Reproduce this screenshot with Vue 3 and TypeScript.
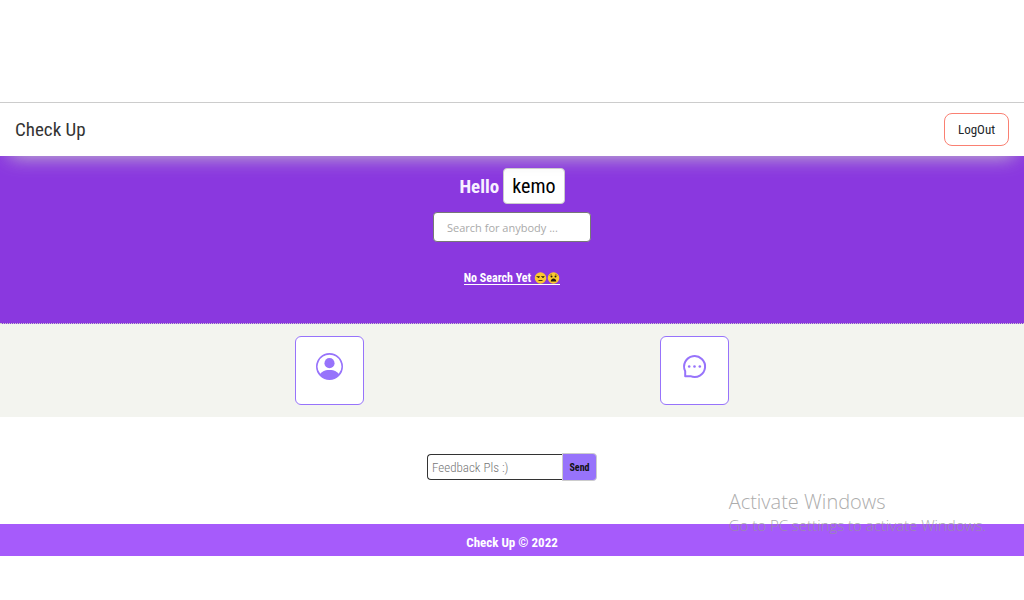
<script setup lang="ts">
import { ref } from 'vue'

const userName = ref<string>('kemo')
const search = ref<string>('')
const feedback = ref<string>('')
</script>

<template>
  <div class="page">
    <header class="bar">
      <h1 class="brand">Check Up</h1>
      <button class="logout" type="button">LogOut</button>
    </header>

    <main>
      <section class="hero">
        <h2 class="hello">Hello <span class="name">{{ userName }}</span></h2>
        <input v-model="search" class="search" type="text" placeholder="Search for anybody ..." aria-label="Search for anybody" />
        <p class="empty">
          <span>No Search Yet</span>
          <svg class="face first" viewBox="0 0 24 24" aria-hidden="true">
            <circle cx="12" cy="12" r="11.5" fill="#fbc92f" />
            <path d="M4 9h6.500M13.500 9H20" stroke="#5b4512" stroke-width="2" />
            <path d="M6 10h4a2 2 0 0 1-4 0M15 10h4a2 2 0 0 1-4 0" fill="#3a2c10" />
            <path d="M8 17h8" stroke="#4a3812" stroke-width="2" />
          </svg>
          <svg class="face" viewBox="0 0 24 24" aria-hidden="true">
            <circle cx="12" cy="12" r="11.5" fill="#fbc92f" />
            <path d="M4 7l5-3M20 7l-5-3" stroke="#9b751b" stroke-width="1.5" />
            <circle cx="8" cy="9" r="2" fill="#241b12" />
            <circle cx="16" cy="9" r="2" fill="#241b12" />
            <path d="M6.500 19c0-8 11-8 11 0z" fill="#241b12" />
          </svg>
        </p>
      </section>

      <nav class="tiles" aria-label="Sections">
        <a class="tile" href="#profile" aria-label="Profile">
          <svg viewBox="0 0 16 16" fill="currentColor" aria-hidden="true">
            <path d="M11 6a3 3 0 1 1-6 0 3 3 0 0 1 6 0z" />
            <path fill-rule="evenodd" d="M0 8a8 8 0 1 1 16 0A8 8 0 0 1 0 8zm8-7a7 7 0 0 0-5.468 11.370C3.242 11.226 4.805 10 8 10s4.757 1.225 5.468 2.370A7 7 0 0 0 8 1z" />
          </svg>
        </a>
        <a class="tile" href="#messages" aria-label="Messages">
          <svg viewBox="0 0 27 27" fill="none" aria-hidden="true">
            <path d="M4.200 23.200V18.200A10.500 10.500 0 1 1 9.500 23.200z" stroke="currentColor" stroke-width="2" stroke-linejoin="round" />
            <g fill="currentColor">
              <circle cx="8.200" cy="13.500" r="1.300" />
              <circle cx="13.500" cy="13.500" r="1.300" />
              <circle cx="18.800" cy="13.500" r="1.300" />
            </g>
          </svg>
        </a>
      </nav>

      <form class="feedback" @submit.prevent>
        <input v-model="feedback" type="text" placeholder="Feedback Pls :)" aria-label="Feedback" />
        <button type="submit">Send</button>
      </form>
    </main>

    <footer class="foot">Check Up © 2022</footer>

    <aside class="notice">
      <p class="notice-title">Activate Windows</p>
      <p class="notice-text">Go to PC settings to activate Windows.</p>
    </aside>
  </div>
</template>

<style>
body {
  background: #fff;
}
</style>

<style scoped>
* {
  box-sizing: border-box;
}

.page {
  position: relative;
  padding: 102px 0 44px;
  font-family: "Liberation Sans Narrow", "Roboto Condensed", "Open Sans Condensed", "DejaVu Sans Condensed", sans-serif;
}

h1,
h2,
p {
  margin: 0;
}

.bar {
  position: relative;
  z-index: 1;
  display: flex;
  align-items: center;
  justify-content: space-between;
  height: 54px;
  padding: 0 15px;
  border-top: 1px solid #ccc;
  background: #fff;
  box-shadow: 0 10px 20px -10px #ccc;
}

.brand {
  color: #333;
  font-size: 19px;
  font-weight: 400;
}

.logout {
  width: 65px;
  height: 33px;
  padding: 0;
  border: 1px solid salmon;
  border-radius: 8px;
  background: #fff;
  color: #212529;
  font: inherit;
  font-size: 13px;
}

.hero {
  display: flex;
  flex-direction: column;
  align-items: center;
  height: 168px;
  padding-top: 12px;
  border-bottom: 1px dotted #ccc;
  background: #8a38df;
}

.hello {
  display: flex;
  align-items: center;
  gap: 4px;
  color: #f8f0ff;
  font-size: 19px;
}

.name {
  display: flex;
  align-items: center;
  height: 36px;
  padding: 0 8px;
  border: 1px solid #ccc;
  border-radius: 4px;
  background: #fff;
  color: #000;
  font-size: 20px;
  font-weight: 400;
}

.search {
  width: 158px;
  height: 30px;
  margin-top: 8px;
  padding: 0 13px;
  border: 1px solid #777;
  border-radius: 4px;
  background: #fff;
  font-family: "Open Sans", sans-serif;
  font-size: 11px;
}

.search::placeholder {
  color: #aaa;
}

.empty {
  display: flex;
  align-items: center;
  height: 14px;
  margin-top: 29px;
  border-bottom: 1px solid #fff;
  color: #fff;
  font-size: 12px;
  font-weight: 700;
}

.face {
  width: 13px;
  height: 12px;
}

.first {
  margin-left: 3px;
}

.tiles {
  display: flex;
  justify-content: space-around;
  padding: 12px 147px;
  background: #f3f4ef;
}

.tile {
  display: flex;
  justify-content: center;
  width: 69px;
  height: 69px;
  padding-top: 16px;
  border: 1px solid #9773fb;
  border-radius: 6px;
  background: #fff;
  color: #9773fb;
}

.tile svg {
  width: 27px;
  height: 27px;
}

.feedback {
  display: flex;
  align-items: center;
  justify-content: center;
  padding: 36px 0 43px;
}

.feedback input {
  width: 135px;
  height: 26px;
  padding: 0 4px;
  border: 1px solid #333;
  border-right: 0;
  border-radius: 4px 0 0 4px;
  background: #fff;
  font: inherit;
  font-size: 13px;
  font-weight: 300;
}

.feedback input::placeholder {
  color: #777;
}

.feedback button {
  width: 35px;
  height: 28px;
  padding: 0;
  border: 1px solid #ccc;
  border-radius: 0 4px 4px 0;
  background: #9773fb;
  color: #111;
  font: inherit;
  font-size: 10px;
  font-weight: 700;
}

.foot {
  height: 32px;
  background: #a65bfb;
  color: #fff;
  font-size: 13px;
  font-weight: 700;
  line-height: 37px;
  text-align: center;
}

.notice {
  position: absolute;
  right: 38px;
  bottom: 65px;
  color: #989898;
  font-family: "Open Sans", sans-serif;
  font-weight: 300;
  opacity: 0.8;
  pointer-events: none;
}

.notice-title {
  font-size: 20px;
  line-height: 26px;
}

.notice-text {
  font-size: 15px;
  line-height: 20px;
}
</style>
